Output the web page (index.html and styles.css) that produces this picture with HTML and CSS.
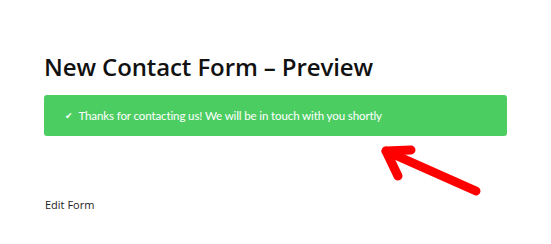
FILE: index.html
```html
<!DOCTYPE html>
<html>
<head>
<meta charset="utf-8">
<link rel="stylesheet" href="styles.css">
</head>
<body>
<div class="page">
  <h1 class="title">New Contact Form – Preview</h1>
  <div class="notice"><span class="check">✔</span>Thanks for contacting us! We will be in touch with you shortly</div>
  <a class="edit">Edit Form</a>
</div>
<svg class="arrow" width="120" height="60" viewBox="0 0 120 60">
  <g fill="none" stroke="#ff0000" stroke-width="9" stroke-linecap="round" stroke-linejoin="round">
    <path d="M98 48 L8 8"/>
    <path d="M33 7 L8 8 L20 33"/>
  </g>
</svg>
</body>
</html>
```
FILE: styles.css
```css
html, body { margin: 0; padding: 0; background: #fff; }
body { font-family: "Open Sans", "Noto Sans", sans-serif; color: #111; width: 551px; height: 244px; overflow: hidden; position: relative; }
.page { padding: 51px 44px 0 44px; }
.title { margin: 0; font-size: 24px; font-weight: 600; line-height: 32px; letter-spacing: -0.1px; color: #111; }
.notice { margin-top: 12px; background: #4ccd62; color: #fff; border-radius: 3px; height: 41px; display: flex; align-items: center; padding-left: 21px; font-family: Lato, "Open Sans", sans-serif; font-size: 11.6px; letter-spacing: -0.15px; }
.check { font-size: 9px; margin-right: 6px; font-family: "DejaVu Sans", sans-serif; }
.edit { display: block; margin-top: 61px; font-size: 11px; color: #222; padding-left: 1px; }
.arrow { position: absolute; left: 378px; top: 143px; }
```
